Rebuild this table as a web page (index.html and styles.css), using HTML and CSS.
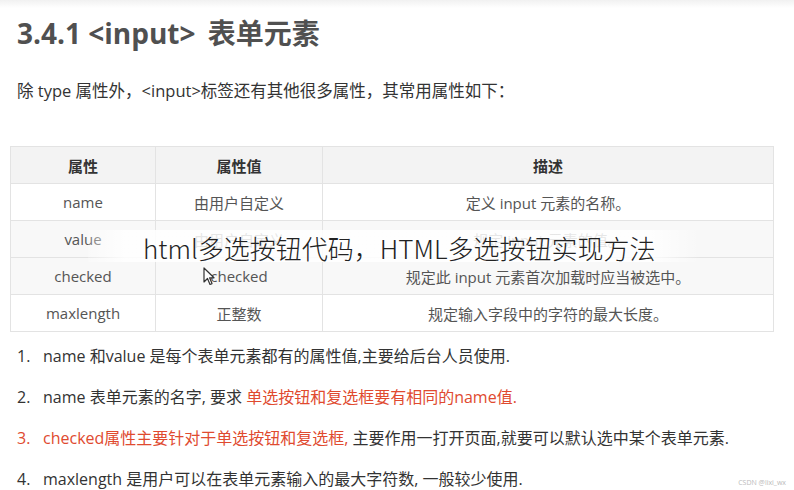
FILE: index.html
```html
<!DOCTYPE html>
<html lang="zh-CN">
<head>
    <meta charset="UTF-8">
    <meta name="viewport" content="width=device-width, initial-scale=1.0">
    <title>3.4.1 input 表单元素</title>
    <link rel="stylesheet" href="styles.css">
</head>
<body>
    <div class="slide">
        <h1 class="title">3.4.1 &lt;input&gt; <span class="title-cn">表单元素</span></h1>
        <p class="intro">除 type 属性外，&lt;input&gt;标签还有其他很多属性，其常用属性如下：</p>

        <div class="table-wrap">
            <table class="attr-table">
                <thead>
                    <tr>
                        <th class="col-name">属性</th>
                        <th class="col-value">属性值</th>
                        <th>描述</th>
                    </tr>
                </thead>
                <tbody>
                    <tr>
                        <td>name</td>
                        <td>由用户自定义</td>
                        <td>定义 input 元素的名称。</td>
                    </tr>
                    <tr class="shaded">
                        <td>value</td>
                        <td>由用户自定义</td>
                        <td>规定 input 元素的值。</td>
                    </tr>
                    <tr class="shaded">
                        <td>checked</td>
                        <td>checked</td>
                        <td>规定此 input 元素首次加载时应当被选中。</td>
                    </tr>
                    <tr>
                        <td>maxlength</td>
                        <td>正整数</td>
                        <td>规定输入字段中的字符的最大长度。</td>
                    </tr>
                </tbody>
            </table>

            <!-- caption band laid over the video frame -->
            <div class="caption">html多选按钮代码，HTML多选按钮实现方法</div>

            <svg class="cursor" width="12" height="19" viewBox="0 0 12 19">
                <path d="M1 1 L1 15 L4.5 11.5 L7 17.5 L9 16.6 L6.6 10.8 L11 10.8 Z" fill="#fff" stroke="#333" stroke-width="1.2" stroke-linejoin="round"/>
            </svg>
        </div>

        <ol class="notes">
            <li><span class="num">1.</span>name 和value 是每个表单元素都有的属性值,主要给后台人员使用.</li>
            <li><span class="num">2.</span>name 表单元素的名字, 要求 <span class="red">单选按钮和复选框要有相同的name值.</span></li>
            <li><span class="num red">3.</span><span class="red">checked属性主要针对于单选按钮和复选框,</span> 主要作用一打开页面,就要可以默认选中某个表单元素.</li>
            <li><span class="num">4.</span>maxlength 是用户可以在表单元素输入的最大字符数, 一般较少使用.</li>
        </ol>

        <div class="mark">CSDN @lixi_wx</div>
    </div>
</body>
</html>
```

FILE: styles.css
```css
html, body {
    margin: 0;
    padding: 0;
    background: #fff;
}
body {
    font-family: "Open Sans", "Noto Sans CJK SC", sans-serif;
    color: #333;
}
.slide {
    position: relative;
    width: 794px;
    height: 490px;
    overflow: hidden;
    background: linear-gradient(#f1f1f1, #fff 8px);
}
.title {
    margin: 0;
    padding: 14px 0 0 17px;
    font-size: 28px;
    line-height: 38px;
    font-weight: 700;
    color: #505050;
}
.title-cn {
    margin-left: 5px;
}
.intro {
    margin: 27px 0 0 17px;
    font-size: 16.5px;
    line-height: 24px;
    color: #333;
}
.table-wrap {
    position: relative;
    margin: 43px 0 0 10px;
    width: 764px;
}
.attr-table {
    width: 100%;
    border-collapse: collapse;
    font-size: 15px;
    color: #555;
    table-layout: fixed;
}
.attr-table th, .attr-table td {
    border: 1px solid #e3e3e3;
    height: 36px;
    padding: 0;
    text-align: center;
}
.attr-table th {
    background: #f3f3f3;
    color: #333;
    font-weight: 700;
}
.col-name {
    width: 144px;
}
.col-value {
    width: 166px;
}
.attr-table tr.shaded td {
    background: #f8f8f8;
}
.caption {
    position: absolute;
    left: 78px;
    top: 84px;
    width: 612px;
    height: 32px;
    padding-left: 55px;
    box-sizing: border-box;
    background: linear-gradient(90deg, rgba(255,255,255,0.2), rgba(255,255,255,0.85) 6%, rgba(255,255,255,0.85) 92%, rgba(255,255,255,0));
    font-family: "Noto Sans CJK SC", "DejaVu Sans", sans-serif;
    font-weight: 300;
    font-size: 26px;
    line-height: 35px;
    color: #222;
    white-space: nowrap;
}
.cursor {
    position: absolute;
    left: 193px;
    top: 121px;
}
.notes {
    list-style: none;
    margin: 12px 0 0 17px;
    padding: 0;
    font-size: 16px;
    line-height: 24px;
    color: #333;
}
.notes li {
    margin-bottom: 17px;
}
.num {
    display: inline-block;
    width: 26px;
}
.red {
    color: #e04a2f;
}
.mark {
    position: absolute;
    right: 8px;
    bottom: 3px;
    font-size: 7px;
    color: #bbb;
}
```
